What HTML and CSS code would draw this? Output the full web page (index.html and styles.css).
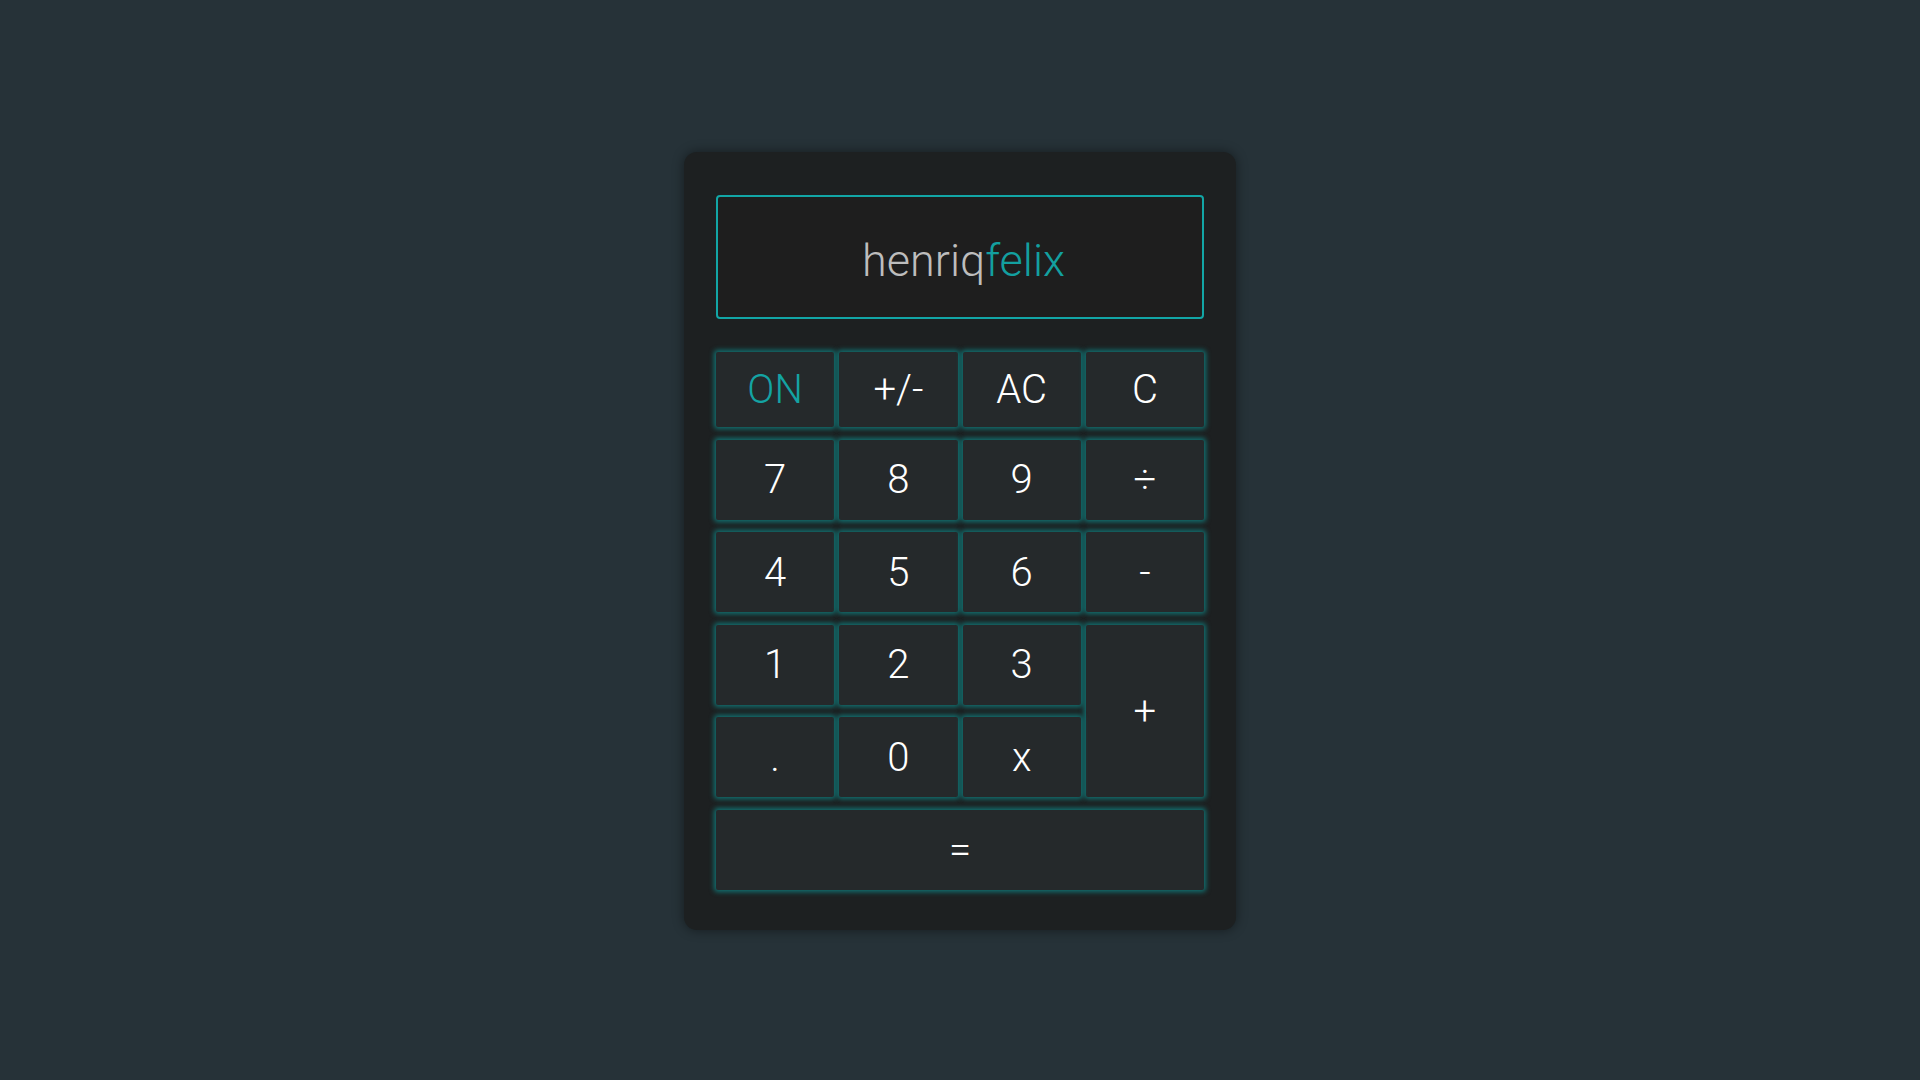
FILE: index.html
```html
<!DOCTYPE html>
<html lang="en">
<head>
<meta charset="utf-8">
<title>Calculator</title>
<link rel="stylesheet" href="styles.css">
</head>
<body>
<main class="calculator">
  <div class="display"><span class="name-a">henriq</span><span class="name-b">felix</span></div>
  <div class="keys">
    <button class="key key-on">ON</button>
    <button class="key">+/-</button>
    <button class="key">AC</button>
    <button class="key">C</button>
    <button class="key">7</button>
    <button class="key">8</button>
    <button class="key">9</button>
    <button class="key">÷</button>
    <button class="key">4</button>
    <button class="key">5</button>
    <button class="key">6</button>
    <button class="key">-</button>
    <button class="key">1</button>
    <button class="key">2</button>
    <button class="key">3</button>
    <button class="key key-plus">+</button>
    <button class="key">.</button>
    <button class="key">0</button>
    <button class="key">x</button>
    <button class="key key-equals">=</button>
  </div>
</main>
</body>
</html>
```
FILE: styles.css
```css
* { box-sizing: border-box; }
html, body { height: 100%; }
body {
  margin: 0;
  padding-top: 2px;
  background: #263238;
  display: flex;
  align-items: center;
  justify-content: center;
  font-family: Roboto, "Liberation Sans", sans-serif;
}
.calculator {
  width: 552px;
  padding: 43px 32px 40px 32px;
  background: #1d2021;
  border-radius: 13px;
  box-shadow: 0 0 12px rgba(0, 0, 0, 0.45);
}
.display {
  height: 124px;
  border: 2px solid #12a6a6;
  border-radius: 4px;
  background: #1e1e1e;
  display: flex;
  align-items: center;
  justify-content: center;
  font-size: 45px;
  font-weight: 300;
  padding-top: 7px;
  padding-left: 7px;
  margin-bottom: 33px;
}
.name-a { color: #bdbdbd; }
.name-b { color: #13a0a0; }
.keys {
  display: grid;
  grid-template-columns: repeat(4, 1fr);
  grid-template-rows: 75px repeat(5, 80px);
  column-gap: 5px;
  row-gap: 12.5px;
}
.key {
  border: none;
  border-radius: 2px;
  background: #25292b;
  color: #ffffff;
  font-family: Roboto, "Liberation Sans", sans-serif;
  font-size: 40px;
  font-weight: 300;
  padding: 0;
  box-shadow: 0 0 5px 2px #117272;
}
.key-on { color: #14a3a3; }
.key-plus { grid-column: 4; grid-row: 4 / span 2; }
.key-equals { grid-column: 1 / span 4; }
```
